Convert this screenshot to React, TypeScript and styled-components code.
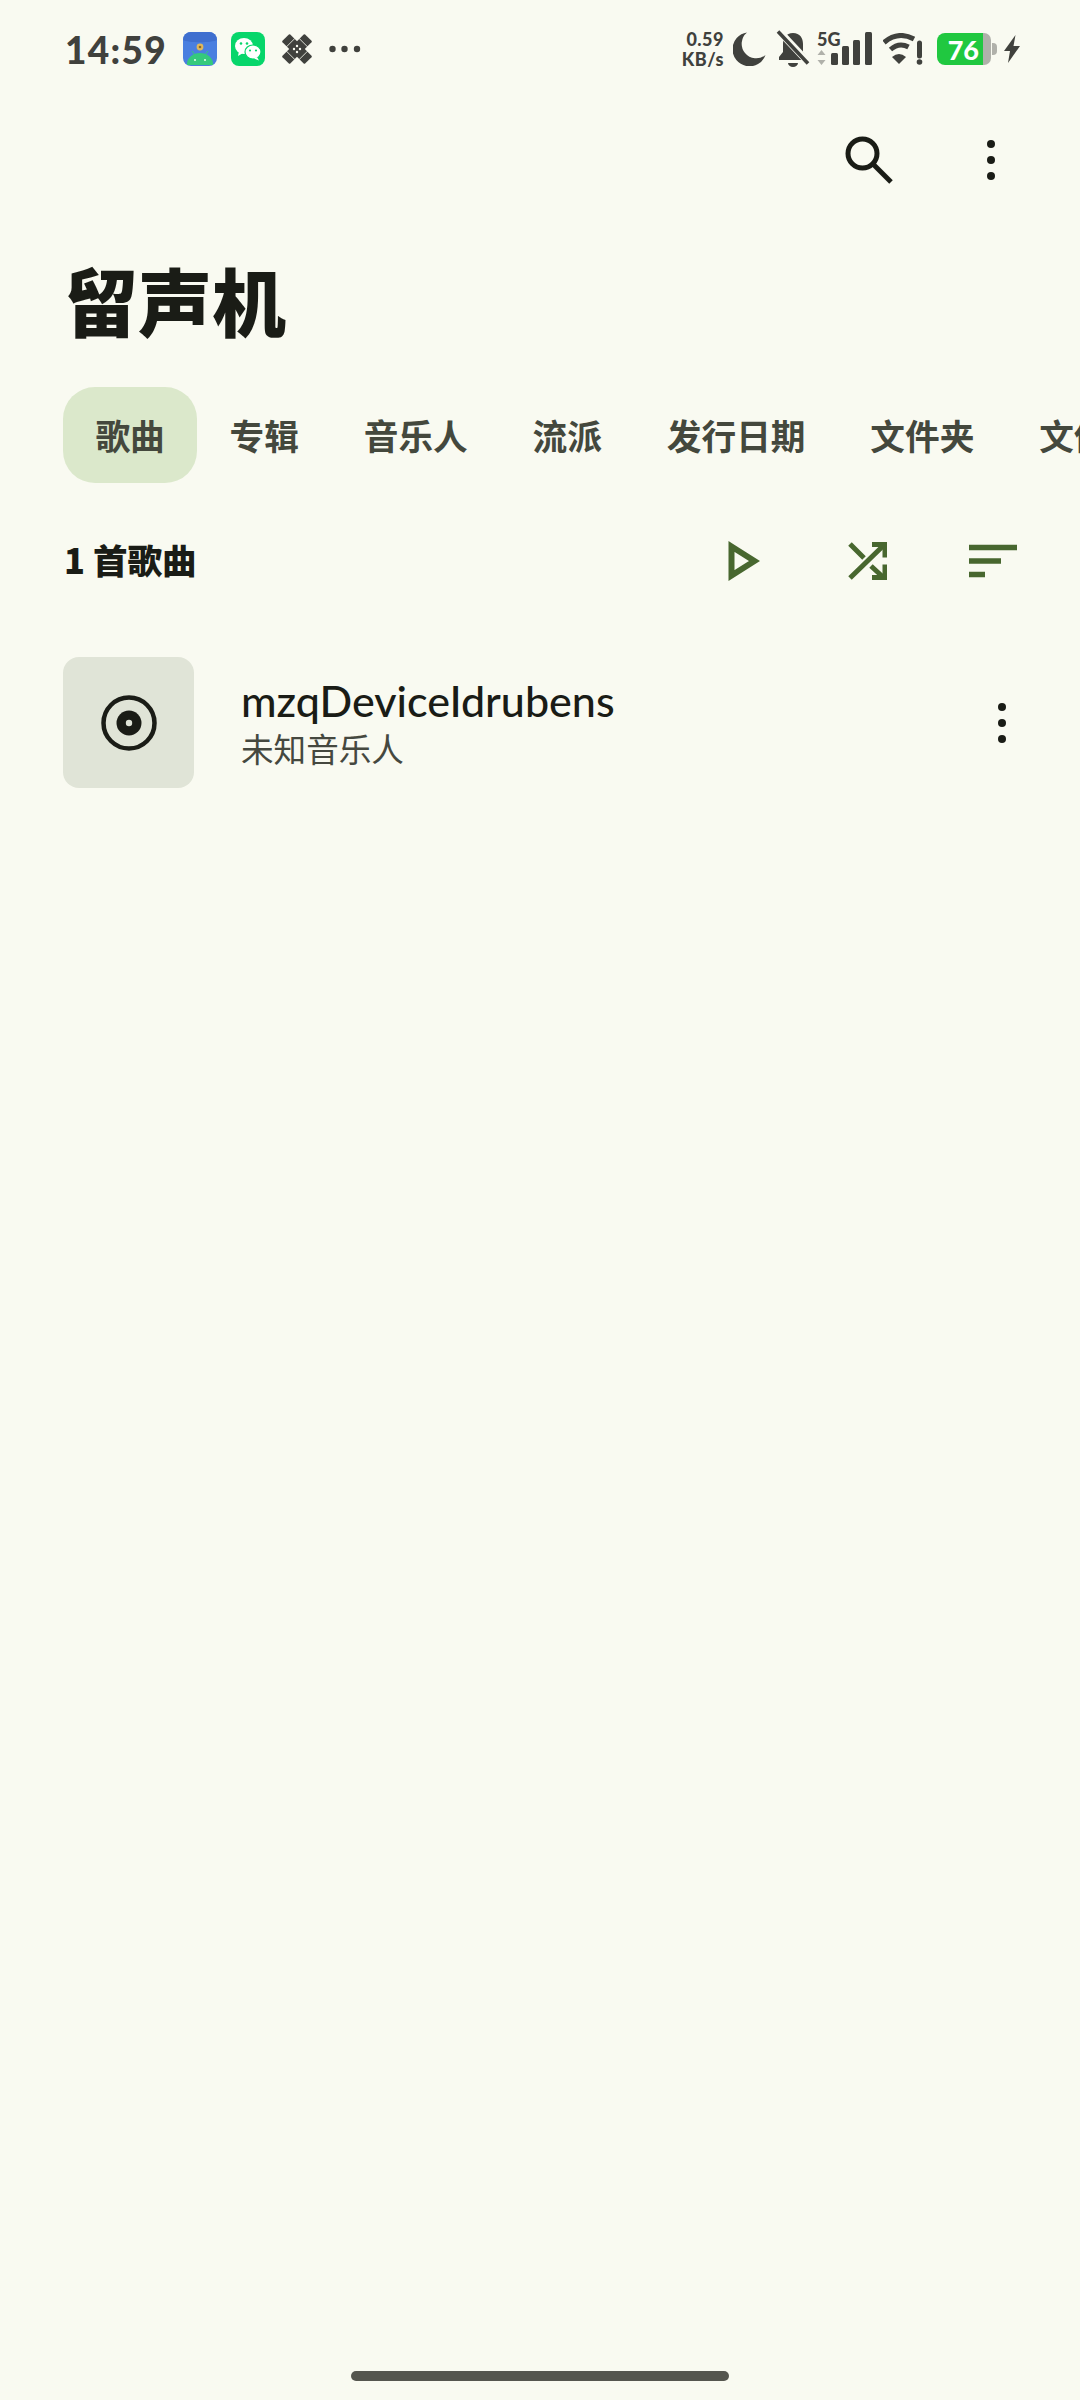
import styled, { createGlobalStyle } from 'styled-components';

const GlobalStyle = createGlobalStyle`
	html, body {
		margin: 0;
		padding: 0;
		background: #f9faf1;
	}
	body {
		font-family: 'Inter', 'Noto Sans CJK SC', sans-serif;
	}
`;

const tabs = ['歌曲', '专辑', '音乐人', '流派', '发行日期', '文件夹', '文件'];

function MoreDots({ color = '#1a1c16' }: { color?: string }) {
	return (
		<svg width="10" height="42" viewBox="0 0 10 42">
			<circle cx="5" cy="5" r="4" fill={color} />
			<circle cx="5" cy="21" r="4" fill={color} />
			<circle cx="5" cy="37" r="4" fill={color} />
		</svg>
	);
}

export default function App() {
	return (
		<Page>
			<GlobalStyle />
			<StatusBar>
				<StatusLeft>
					<Time>14:59</Time>
					<svg width="34" height="34" viewBox="0 0 34 34">
						<rect width="34" height="34" rx="8" fill="#4a7fe0" />
						<path d="M0 8a8 8 0 0 1 8-8h18a8 8 0 0 1 8 8c-5 3-29 3-34 0z" fill="#3f6fcf" />
						<circle cx="17" cy="15" r="3.4" fill="#e0b85c" />
						<circle cx="17" cy="15" r="1.3" fill="#8a6a2c" />
						<path d="M4 34v-1a13 11 0 0 1 26 0v1z" fill="#35c97c" transform="translate(0 -1)" />
						<path d="M9 19l3 4M25 19l-3 4" stroke="#35c97c" strokeWidth="1" />
						<circle cx="12" cy="28" r="1" fill="#e9fff2" />
						<circle cx="22" cy="28" r="1" fill="#e9fff2" />
					</svg>
					<WechatIcon width="34" height="34" viewBox="0 0 34 34">
						<rect width="34" height="34" rx="8" fill="#07d66b" />
						<ellipse cx="13" cy="14" rx="9" ry="8" fill="#fff" />
						<path d="M8 19l-1 5 5-3z" fill="#fff" />
						<ellipse cx="22" cy="20" rx="8" ry="7" fill="#fff" stroke="#07d66b" strokeWidth="1.2" />
						<path d="M26 25l2 3.5-5-2z" fill="#fff" />
						<circle cx="10" cy="11.5" r="1.3" fill="#07d66b" />
						<circle cx="16" cy="11.5" r="1.3" fill="#07d66b" />
						<circle cx="19" cy="18.5" r="1.1" fill="#07d66b" />
						<circle cx="25" cy="18.5" r="1.1" fill="#07d66b" />
					</WechatIcon>
					<BandageIcon width="30" height="30" viewBox="0 0 30 30">
						<g transform="rotate(45 15 15)">
							<rect x="-1" y="9.500" width="32" height="11" rx="1" fill="#40413d" />
							<path d="M6 9v12M24 9v12" stroke="#f9faf1" strokeWidth="0.800" />
						</g>
						<g transform="rotate(-45 15 15)">
							<rect x="-1" y="9.500" width="32" height="11" rx="1" fill="#40413d" />
							<path d="M6 9v12M24 9v12" stroke="#f9faf1" strokeWidth="0.800" />
						</g>
						<circle cx="15" cy="12" r="1.200" fill="#f9faf1" />
						<circle cx="12" cy="15" r="1.200" fill="#f9faf1" />
						<circle cx="18" cy="15" r="1.200" fill="#f9faf1" />
						<circle cx="15" cy="18" r="1.200" fill="#f9faf1" />
					</BandageIcon>
					<OverflowIcon width="32" height="8" viewBox="0 0 32 8">
						<circle cx="3.500" cy="4" r="3.200" fill="#40413d" />
						<circle cx="15.500" cy="4" r="3.200" fill="#40413d" />
						<circle cx="28" cy="4" r="3.200" fill="#40413d" />
					</OverflowIcon>
				</StatusLeft>
				<StatusRight>
					<NetSpeed>
						<span>0.59</span>
						<span>KB/s</span>
					</NetSpeed>
					<MoonIcon width="33" height="34" viewBox="0 0 33 34">
						<path d="M14 0.500A17 17 0 1 0 32.500 23 14.500 14.500 0 0 1 14 0.500z" fill="#40413d" />
					</MoonIcon>
					<BellIcon width="34" height="38" viewBox="0 0 34 38">
						<path d="M17 3c-7 0-10 5-10 11v8l-4 5v3h28v-3l-4-5v-8c0-6-3-11-10-11z" fill="#40413d" />
						<path d="M12 33h10a5 4 0 0 1-10 0z" fill="#40413d" />
						<path d="M3 1l29 31" stroke="#f9faf1" strokeWidth="7" />
						<path d="M2 1.500l30 32" stroke="#40413d" strokeWidth="3.600" />
					</BellIcon>
					<SignalGroup>
						<NetworkLabel>5G</NetworkLabel>
						<svg width="56" height="34" viewBox="0 0 56 34">
							<path d="M4.500 18l4 5h-8zM4.500 33l4-5h-8z" fill="#b0b1aa" />
							<rect x="14" y="21" width="7" height="12" rx="1.500" fill="#40413d" />
							<rect x="25" y="14" width="7" height="19" rx="1.500" fill="#40413d" />
							<rect x="36" y="8" width="7" height="25" rx="1.500" fill="#40413d" />
							<rect x="48" y="0" width="7" height="33" rx="1.500" fill="#40413d" />
						</svg>
					</SignalGroup>
					<WifiIcon width="42" height="32" viewBox="0 0 42 32">
						<path d="M1 9.500Q15-2.500 31 6" fill="none" stroke="#40413d" strokeWidth="5" />
						<path d="M7.500 16.500Q16 9 25.500 14" fill="none" stroke="#40413d" strokeWidth="5" />
						<path d="M9 24q7-6 14 0l-7 7z" fill="#40413d" />
						<path d="M36.500 10v13" stroke="#40413d" strokeWidth="5" strokeLinecap="round" />
						<circle cx="36.500" cy="29" r="2.800" fill="#40413d" />
					</WifiIcon>
					<Battery>
						<BatteryFill>76</BatteryFill>
						<BatteryRest />
						<BatteryNub />
					</Battery>
					<BoltIcon width="16" height="28" viewBox="0 0 16 28">
						<path d="M11.500 0L0 16h6L4 28 16 11H9.500z" fill="#40413d" />
					</BoltIcon>
				</StatusRight>
			</StatusBar>

			<ActionBar>
				<SearchButton>
					<svg width="48" height="48" viewBox="0 0 48 48">
						<circle cx="17.500" cy="17.500" r="14.500" fill="none" stroke="#1a1c16" strokeWidth="5" />
						<path d="M28 28l18 18" stroke="#1a1c16" strokeWidth="5" />
					</svg>
				</SearchButton>
				<MoreButton>
					<MoreDots />
				</MoreButton>
			</ActionBar>

			<Title>留声机</Title>

			<TabRow>
				{tabs.map((tab, i) => (
					<Tab key={tab} $active={i === 0}>
						{tab}
					</Tab>
				))}
			</TabRow>

			<SummaryRow>
				<SongCount>1 首歌曲</SongCount>
				<SummaryActions>
					<PlayIcon width="32" height="40" viewBox="0 0 32 40">
						<path d="M3.500 5.500l23 14.500-23 14.500z" fill="none" stroke="#48672f" strokeWidth="6" />
					</PlayIcon>
					<svg width="40" height="40" viewBox="0 0 40 40">
						<path d="M3 37L37 4M3 3l14 14M24 25l13 12" fill="none" stroke="#48672f" strokeWidth="5" />
						<path d="M25 3.500h13v13M25 36.500h13v-13" fill="none" stroke="#48672f" strokeWidth="5" />
					</svg>
					<svg width="48" height="34" viewBox="0 0 48 34">
						<path d="M0 3.500h48M0 17h32M0 30.500h16" stroke="#48672f" strokeWidth="5.500" />
					</svg>
				</SummaryActions>
			</SummaryRow>

			<SongRow>
				<Artwork>
					<svg width="58" height="58" viewBox="0 0 58 58">
						<circle cx="29" cy="29" r="25.500" fill="none" stroke="#1a1c16" strokeWidth="4.500" />
						<circle cx="29" cy="29" r="12.500" fill="#1a1c16" />
						<circle cx="29" cy="29" r="3.200" fill="#e0e4d7" />
					</svg>
				</Artwork>
				<SongText>
					<SongTitle>mzqDeviceIdrubens</SongTitle>
					<SongArtist>未知音乐人</SongArtist>
				</SongText>
				<MoreDots />
			</SongRow>

			<HomeBar />
		</Page>
	);
}

const Page = styled.div`
	display: flex;
	flex-direction: column;
	width: 1080px;
	height: 2400px;
	overflow: hidden;
	background: #f9faf1;
	color: #1a1c16;
`;

const StatusBar = styled.div`
	display: flex;
	align-items: center;
	justify-content: space-between;
	height: 98px;
	padding: 0 60px 0 65px;
`;

const StatusLeft = styled.div`
	display: flex;
	align-items: center;
`;

const Time = styled.span`
	width: 118px;
	font-family: 'Lato', sans-serif;
	font-size: 37px;
	font-weight: 900;
	letter-spacing: 1.300px;
	color: #40413d;
`;

const WechatIcon = styled.svg`
	margin-left: 14px;
`;

const BandageIcon = styled.svg`
	margin-left: 17px;
`;

const OverflowIcon = styled.svg`
	margin-left: 17px;
`;

const StatusRight = styled.div`
	display: flex;
	align-items: center;
`;

const NetSpeed = styled.div`
	display: flex;
	flex-direction: column;
	align-items: flex-end;
	width: 42px;
	font-family: 'Lato', sans-serif;
	font-size: 18px;
	font-weight: 900;
	line-height: 20px;
	letter-spacing: 0.500px;
	color: #40413d;
`;

const MoonIcon = styled.svg`
	margin-left: 9px;
`;

const BellIcon = styled.svg`
	margin-left: 10px;
`;

const SignalGroup = styled.div`
	position: relative;
	width: 56px;
	height: 34px;
	margin-left: 7px;
`;

const NetworkLabel = styled.span`
	position: absolute;
	top: -2px;
	left: 0;
	font-family: 'Lato', sans-serif;
	font-size: 18px;
	font-weight: 900;
	line-height: 18px;
	color: #40413d;
`;

const WifiIcon = styled.svg`
	margin-left: 10px;
`;

const Battery = styled.div`
	display: flex;
	align-items: center;
	height: 32px;
	margin-left: 12px;
`;

const BatteryFill = styled.div`
	display: flex;
	align-items: center;
	justify-content: flex-end;
	box-sizing: border-box;
	width: 46px;
	height: 32px;
	padding-right: 4px;
	border-radius: 8px 0 0 8px;
	background: #20c840;
	font-family: 'Lato', sans-serif;
	font-size: 27px;
	font-weight: 900;
	color: #ffffff;
`;

const BatteryRest = styled.div`
	width: 8px;
	height: 32px;
	border-radius: 0 7px 7px 0;
	background: #b0b1aa;
`;

const BatteryNub = styled.div`
	width: 5px;
	height: 12px;
	margin-left: 1px;
	border-radius: 0 4px 4px 0;
	background: #b0b1aa;
`;

const BoltIcon = styled.svg`
	margin-left: 7px;
`;

const ActionBar = styled.div`
	display: flex;
	align-items: center;
	justify-content: flex-end;
	height: 124px;
	padding-right: 84px;
`;

const SearchButton = styled.div`
	display: flex;
	margin-right: 93px;
`;

const MoreButton = styled.div`
	display: flex;
`;

const Title = styled.h1`
	margin: 0;
	padding: 24px 0 0 64px;
	height: 165px;
	box-sizing: border-box;
	font-family: 'Noto Sans CJK SC', sans-serif;
	font-size: 74px;
	font-weight: 900;
	line-height: 106px;
	color: #1a1c16;
`;

const TabRow = styled.div`
	display: flex;
	flex-shrink: 0;
	height: 96px;
	padding-left: 63px;
	white-space: nowrap;
`;

const Tab = styled.div<{ $active: boolean }>`
	display: flex;
	align-items: center;
	flex-shrink: 0;
	padding: 0 32.400px;
	border-radius: 32px;
	background: ${(p) => (p.$active ? '#dbe8cb' : 'transparent')};
	font-family: 'Noto Sans CJK SC', sans-serif;
	font-size: 34.700px;
	font-weight: 700;
	color: #44483d;
`;

const SummaryRow = styled.div`
	display: flex;
	align-items: center;
	justify-content: space-between;
	height: 96px;
	margin-top: 30px;
	padding: 0 63px 0 64px;
`;

const SongCount = styled.span`
	margin-bottom: 4px;
	font-family: 'Noto Sans CJK SC', sans-serif;
	font-size: 34.500px;
	font-weight: 900;
	color: #1a1c16;
`;

const SummaryActions = styled.div`
	display: flex;
	align-items: center;
	gap: 82px;
`;

const PlayIcon = styled.svg`
	margin-right: 5px;
`;

const SongRow = styled.div`
	display: flex;
	align-items: center;
	margin-top: 48px;
	padding: 0 73px 0 63px;
`;

const Artwork = styled.div`
	display: flex;
	align-items: center;
	justify-content: center;
	width: 131px;
	height: 131px;
	border-radius: 16px;
	background: #e0e4d7;
`;

const SongText = styled.div`
	display: flex;
	flex-direction: column;
	flex: 1;
	margin-left: 47px;
`;

const SongTitle = styled.span`
	font-family: 'Lato', sans-serif;
	font-size: 43px;
	font-weight: 500;
	line-height: 50px;
	color: #1a1c16;
`;

const SongArtist = styled.span`
	font-family: 'Noto Sans CJK SC', sans-serif;
	font-size: 32.600px;
	line-height: 44px;
	color: #45483f;
`;

const HomeBar = styled.div`
	width: 378px;
	height: 10px;
	margin: auto auto 19px;
	border-radius: 5px;
	background: #55564f;
`;
